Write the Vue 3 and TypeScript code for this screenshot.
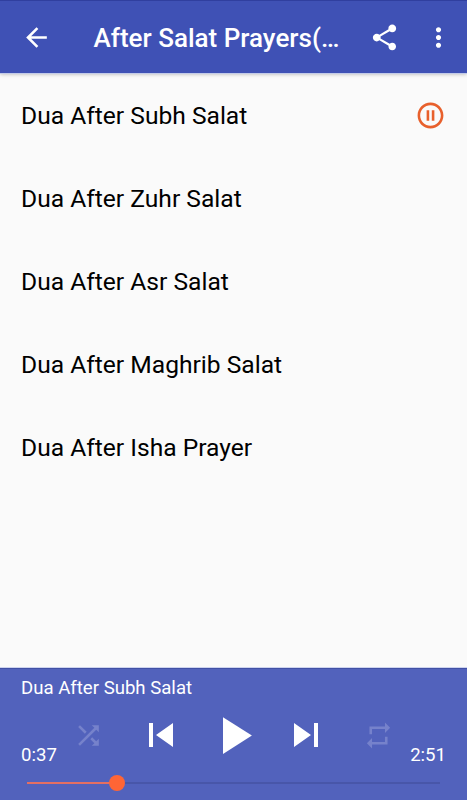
<script setup lang="ts">
import { ref, computed } from 'vue'

const tracks: string[] = [
  'Dua After Subh Salat',
  'Dua After Zuhr Salat',
  'Dua After Asr Salat',
  'Dua After Maghrib Salat',
  'Dua After Isha Prayer',
]
const current = ref(0)
const elapsed = ref(37.4)
const duration = ref(171)

function clock(seconds: number): string {
  const whole = Math.floor(seconds)
  return `${Math.floor(whole / 60)}:${String(whole % 60).padStart(2, '0')}`
}
const progress = computed(() => `${(elapsed.value / duration.value) * 100}%`)
</script>

<template>
  <div class="screen">
    <header class="app-bar">
      <button class="icon-button back" aria-label="Back">
        <svg viewBox="0 0 24 24"><path d="M20 11H7.83l5.59-5.59L12 4l-8 8 8 8 1.41-1.41L7.83 13H20v-2z" /></svg>
      </button>
      <h1 class="title">After Salat Prayers(…</h1>
      <button class="icon-button share" aria-label="Share">
        <svg viewBox="0 0 24 24"><path d="M18 16.08c-.76 0-1.44.3-1.96.77L8.91 12.7c.05-.23.09-.46.09-.7s-.04-.47-.09-.7l7.05-4.11c.54.5 1.25.81 2.04.81 1.66 0 3-1.34 3-3s-1.34-3-3-3-3 1.34-3 3c0 .24.04.47.09.7L8.04 9.81C7.5 9.31 6.79 9 6 9c-1.66 0-3 1.34-3 3s1.34 3 3 3c.79 0 1.5-.31 2.04-.81l7.12 4.16c-.05.21-.08.43-.08.65 0 1.61 1.31 2.92 2.92 2.92s2.92-1.31 2.92-2.92-1.31-2.92-2.92-2.92z" /></svg>
      </button>
      <button class="icon-button more" aria-label="More options">
        <svg viewBox="0 0 24 24"><path d="M12 8c1.1 0 2-.9 2-2s-.9-2-2-2-2 .9-2 2 .9 2 2 2zm0 2c-1.1 0-2 .9-2 2s.9 2 2 2 2-.9 2-2-.9-2-2-2zm0 6c-1.1 0-2 .9-2 2s.9 2 2 2 2-.9 2-2-.9-2-2-2z" /></svg>
      </button>
    </header>

    <ul class="tracks">
      <li v-for="(track, i) in tracks" :key="track" class="track" @click="current = i">
        <span>{{ track }}</span>
        <svg v-if="i === current" class="playing" viewBox="0 0 24 24"><path d="M9 16h2V8H9v8zm3-14C6.48 2 2 6.48 2 12s4.480 10 10 10 10-4.480 10-10S17.520 2 12 2zm0 18c-4.410 0-8-3.590-8-8s3.590-8 8-8 8 3.590 8 8-3.590 8-8 8zm1-4h2V8h-2v8z" /></svg>
      </li>
    </ul>

    <footer class="player">
      <div class="now">{{ tracks[current] }}</div>
      <div class="controls">
        <span class="time">{{ clock(elapsed) }}</span>
        <div class="buttons">
          <button class="icon-button dim" aria-label="Shuffle">
            <svg viewBox="0 0 24 24"><path d="M10.590 9.170L5.410 4 4 5.410l5.170 5.170 1.420-1.410zM14.500 4l2.040 2.040L4 18.590 5.410 20 17.960 7.460 20 9.500V4h-5.500zm.330 9.410l-1.410 1.410 3.130 3.130L14.500 20H20v-5.500l-2.040 2.040-3.130-3.130z" /></svg>
          </button>
          <div class="transport">
            <button class="icon-button skip" aria-label="Previous">
              <svg viewBox="0 0 24 24"><path d="M6 6h2v12H6zm3.500 6l8.500 6V6z" /></svg>
            </button>
            <button class="icon-button play" aria-label="Play">
              <svg viewBox="0 0 24 24"><path d="M8 5v14l11-7z" /></svg>
            </button>
            <button class="icon-button skip" aria-label="Next">
              <svg viewBox="0 0 24 24"><path d="M6 18l8.500-6L6 6v12zM16 6v12h2V6h-2z" /></svg>
            </button>
          </div>
          <button class="icon-button dim" aria-label="Repeat">
            <svg viewBox="0 0 24 24"><path d="M7 7h10v3l4-4-4-4v3H5v6h2V7zm10 10H7v-3l-4 4 4 4v-3h12v-6h-2v4z" /></svg>
          </button>
        </div>
        <span class="time end">{{ clock(duration) }}</span>
      </div>
      <div class="seek">
        <div class="filled" :style="{ width: progress }"><i class="thumb"></i></div>
      </div>
    </footer>
  </div>
</template>

<style>
body {
  margin: 0;
}
</style>

<style scoped>
.screen {
  height: 800px;
  display: flex;
  flex-direction: column;
  overflow: hidden;
  background: #fafafa;
  color: #000;
  font-family: Roboto, "Liberation Sans", sans-serif;
}
.app-bar {
  flex: none;
  height: 73px;
  box-sizing: border-box;
  display: flex;
  align-items: center;
  padding: 1px 13px 0 21px;
  border-top: 1px solid #303f9f;
  background: #3f51b5;
  color: #fff;
  box-shadow: 0 1px 0 #c3cbe8, 0 1px 4px rgba(0, 0, 0, 0.3);
}
.icon-button {
  flex: none;
  display: block;
  width: 31px;
  height: 31px;
  padding: 0;
  border: 0;
  background: none;
  color: #fff;
}
.icon-button svg {
  display: block;
  width: 100%;
  height: 100%;
  fill: currentColor;
}
.title {
  flex: 1;
  margin: 0 0 0 41.5px;
  font-size: 26px;
  line-height: 32px;
  font-weight: 500;
  white-space: nowrap;
}
.share {
  margin-right: 23px;
}
.tracks {
  flex: 1;
  margin: 0;
  padding: 1px 0 0;
  list-style: none;
}
.track {
  height: 83px;
  box-sizing: border-box;
  display: flex;
  align-items: center;
  justify-content: space-between;
  padding: 0 21px;
  font-size: 24.6px;
}
.playing {
  width: 31px;
  height: 31px;
  fill: #e8602c;
}
.player {
  flex: none;
  height: 132px;
  box-sizing: border-box;
  border-top: 1px solid #4150a5;
  padding: 7px 21px 0;
  background: #5262bc;
  color: #fff;
  box-shadow: 0 -1px 0 #cdd3ee;
}
.now {
  font-size: 18.6px;
  line-height: 24px;
}
.controls {
  display: flex;
  justify-content: space-between;
  height: 70px;
}
.time {
  flex: none;
  width: 52px;
  align-self: flex-end;
  font-size: 18.6px;
  line-height: 24px;
  margin-bottom: 3px;
}
.end {
  text-align: right;
}
.buttons {
  flex: 1;
  display: flex;
  align-items: center;
  justify-content: space-between;
}
.transport {
  display: flex;
  align-items: center;
  gap: 17px;
}
.skip {
  width: 48px;
  height: 48px;
}
.play {
  width: 63px;
  height: 63px;
}
.dim {
  color: #7682cb;
}
.seek {
  height: 2px;
  margin: 12px 6px 0;
  background: #4856a9;
}
.filled {
  position: relative;
  height: 100%;
  background: #e36f62;
}
.thumb {
  position: absolute;
  right: -8px;
  top: -7px;
  width: 16px;
  height: 16px;
  border-radius: 50%;
  background: #ff6535;
}
</style>
